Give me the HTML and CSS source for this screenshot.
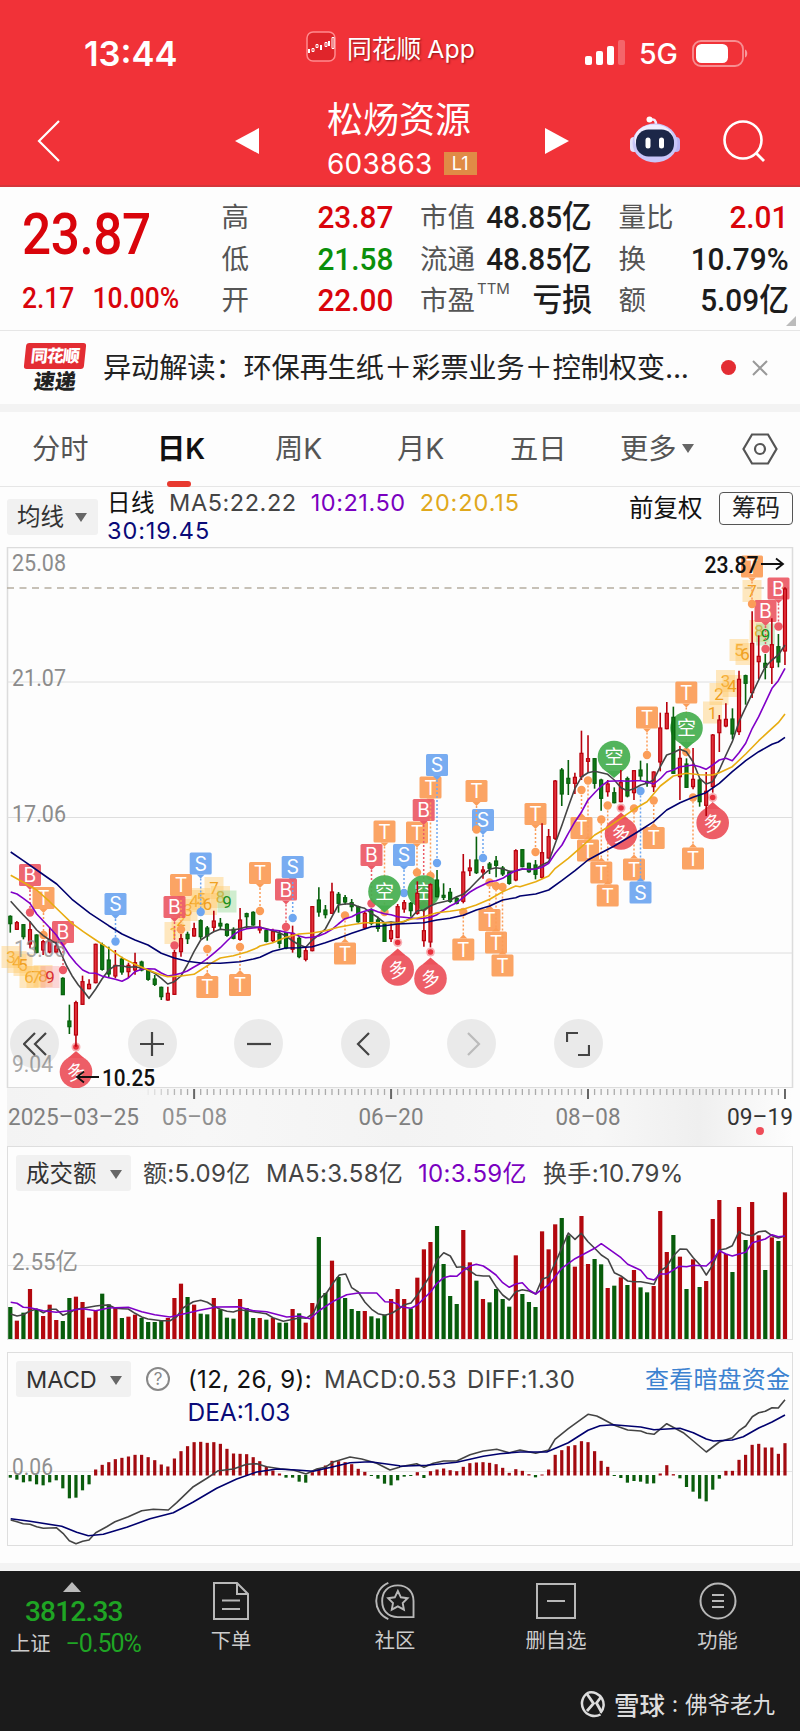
FILE: index.html
```html
<!DOCTYPE html>
<html lang="zh-CN">
<head>
  <meta charset="UTF-8" />
  <meta name="viewport" content="width=device-width, initial-scale=1" />
  <title>松炀资源 603863</title>
  <link rel="stylesheet" href="styles.css">
</head>
<body>

<header>
  <div class="status">
    <span class="time">13:44</span>
    <div class="app">
      <svg width="30" height="31" viewBox="0 0 30 31">
        <rect x="1" y="1" width="28" height="29" rx="6" fill="#e0252b" stroke="#ff8b8e" stroke-width="1.5"/>
        <path d="M3 18v4M15 14v5M23 10v5" stroke="#fff" stroke-width="2"/>
        <path d="M6 17.500h2v3H6zM10 13.500h2v3h-2zM19 11.500h2v4h-2zM26 6.500h2v11h-2z" fill="none" stroke="#fff" stroke-width="1"/>
      </svg>
      <span>同花顺 App</span>
    </div>
    <div class="signal">
      <svg width="40" height="26" viewBox="0 0 40 26">
        <rect x="0" y="16" width="7" height="9" rx="2" fill="#fff"/>
        <rect x="11" y="11" width="7" height="14" rx="2" fill="#fff"/>
        <rect x="22" y="6" width="7" height="19" rx="2" fill="#fff"/>
        <rect x="33" y="0" width="7" height="25" rx="2" fill="#fff" opacity=".25"/>
      </svg>
      <span>5G</span>
      <svg width="57" height="27" viewBox="0 0 57 27">
        <rect x="1" y="1" width="50" height="25" rx="8" fill="none" stroke="#fff" stroke-width="1.8" opacity=".45"/>
        <rect x="4" y="4" width="32" height="19" rx="5.500" fill="#fff"/>
        <path d="M53 9.500c3 1 3 7 0 8z" fill="#fff" opacity=".5"/>
      </svg>
    </div>
  </div>
  <nav>
    <svg class="back" width="24" height="42" viewBox="0 0 24 42"><path d="M22 1L2 21l20 20" fill="none" stroke="#fff" stroke-width="2.200"/></svg>
    <svg class="prev" width="24" height="26" viewBox="0 0 24 26"><path d="M24 0v26L0 13z" fill="#fff"/></svg>
    <div class="stock">
      <h1>松炀资源</h1>
      <p><span>603863</span><b>L1</b></p>
    </div>
    <svg class="next" width="24" height="26" viewBox="0 0 24 26"><path d="M0 0v26l24-13z" fill="#fff"/></svg>
    <svg class="robot" width="50" height="48" viewBox="0 0 50 48">
      <path d="M26 9c0-5-2-6-5-5.500" fill="none" stroke="#f0edff" stroke-width="2.500"/>
      <circle cx="19.500" cy="3.500" r="3" fill="#fff"/>
      <rect x="0" y="21" width="8" height="15" rx="4" fill="#e4e2fb"/>
      <rect x="42" y="21" width="8" height="15" rx="4" fill="#b9b4f4"/>
      <ellipse cx="25" cy="27" rx="22.500" ry="19.500" fill="#c9c6f8"/>
      <ellipse cx="24" cy="23" rx="19.500" ry="14.500" fill="#f0eeff"/>
      <rect x="6" y="13.500" width="38" height="27" rx="12.500" fill="#1c2748"/>
      <rect x="15.500" y="21.500" width="5" height="11" rx="2.500" fill="#fff"/>
      <rect x="29" y="21.500" width="5" height="11" rx="2.500" fill="#fff"/>
    </svg>
    <svg class="search" width="42" height="42" viewBox="0 0 42 42"><circle cx="20" cy="20" r="18.500" fill="none" stroke="#fff" stroke-width="2.600"/><path d="M33 33l8 8" stroke="#fff" stroke-width="2.800"/></svg>
  </nav>
</header>

<section class="quote">
  <div class="price">
    <strong>23.87</strong>
    <p><span>2.17</span><span>10.00%</span></p>
  </div>
  <dl>
    <div><dt>高</dt><dd class="up">23.87</dd></div>
    <div><dt>低</dt><dd class="down">21.58</dd></div>
    <div><dt>开</dt><dd class="up">22.00</dd></div>
  </dl>
  <dl>
    <div><dt>市值</dt><dd>48.85亿</dd></div>
    <div><dt>流通</dt><dd>48.85亿</dd></div>
    <div><dt>市盈<sup>TTM</sup></dt><dd>亏损</dd></div>
  </dl>
  <dl>
    <div><dt>量比</dt><dd class="up">2.01</dd></div>
    <div><dt>换</dt><dd>10.79%</dd></div>
    <div><dt>额</dt><dd>5.09亿</dd></div>
  </dl>
  <i class="corner"></i>
</section>

<section class="news">
  <div class="news-logo"><b>同花顺</b><em>速递</em></div>
  <p>异动解读：环保再生纸＋彩票业务＋控制权变...</p>
  <i class="dot"></i>
  <svg width="16" height="16" viewBox="0 0 16 16"><path d="M1 1l14 14M15 1L1 15" stroke="#999" stroke-width="2"/></svg>
</section>

<nav class="tabs">
  <span>分时</span>
  <span class="active">日K</span>
  <span>周K</span>
  <span>月K</span>
  <span>五日</span>
  <span>更多<i class="caret"></i></span>
  <svg width="36" height="32" viewBox="0 0 36 32"><path d="M10 1.500h16L34.500 16 26 30.500H10L1.500 16z" fill="none" stroke="#555" stroke-width="2.200"/><circle cx="18" cy="16" r="5" fill="none" stroke="#555" stroke-width="2.200"/></svg>
</nav>

<section class="ma">
  <span class="select">均线<i class="caret"></i></span>
  <p>
    <span class="black">日线</span><span class="ma5">MA5:22.22</span><span class="ma10">10:21.50</span><span class="ma20">20:20.15</span><br>
    <span class="ma30">30:19.45</span>
  </p>
  <span class="adjust">前复权</span>
  <span class="chips">筹码</span>
</section>

<section class="kline">
  <svg id="kline" width="800" height="541" viewBox="0 547 800 541"></svg>
  <div class="tools">
    <button><svg viewBox="0 0 24 24"><path d="M12 1L1 12l11 11M23 1L12 12l11 11"/></svg></button>
    <button><svg viewBox="0 0 24 24"><path d="M0 12h24M12 0v24"/></svg></button>
    <button><svg viewBox="0 0 24 24"><path d="M0 12h24"/></svg></button>
    <button><svg viewBox="0 0 24 24"><path d="M16 1L5 12l11 11"/></svg></button>
    <button class="off"><svg viewBox="0 0 24 24"><path d="M8 1l11 11L8 23"/></svg></button>
    <button><svg viewBox="0 0 24 24"><path d="M1 10V1h11M23 13v10H12"/></svg></button>
  </div>
</section>
<svg id="axis" width="800" height="58" viewBox="0 1088 800 58"></svg>

<section class="panel">
  <div class="panel-head">
    <span class="select">成交额<i class="caret"></i></span>
    <span class="v1">额:5.09亿</span><span class="v2">MA5:3.58亿</span><span class="v3 ma10">10:3.59亿</span><span class="v4">换手:10.79%</span>
  </div>
  <svg id="volume" width="784" height="147" viewBox="8 1192 784 147"></svg>
</section>

<section class="panel macd">
  <div class="panel-head">
    <span class="select">MACD<i class="caret"></i></span>
    <span class="help">?</span>
    <span class="m1 black">(12, 26, 9):</span><span class="m2">MACD:0.53</span><span class="m3">DIFF:1.30</span>
    <a>查看暗盘资金</a>
  </div>
  <svg id="macd" width="784" height="148" viewBox="8 1397 784 148"></svg>
</section>

<footer>
  <div class="index">
    <i></i>
    <strong>3812.33</strong>
    <p><span>上证</span><b>−0.50%</b></p>
  </div>
  <div class="item">
    <svg width="36" height="38" viewBox="0 0 36 38"><path d="M1 1h23l11 11v25H1zM24 1v11h11M9 18.500h18M9 27h18"/></svg>
    <span>下单</span>
  </div>
  <div class="item">
    <svg width="42" height="40" viewBox="0 0 42 40"><path d="M14 1C-3 8-3 32 14 39M24 3.500c10 0 16.500 7 16.500 16.500v17H24C13 37 7.500 29.500 7.500 20S13 3.500 24 3.500zM24 9.500l3.200 6.600 7 1-5.100 5 1.300 7-6.400-3.400-6.400 3.400 1.300-7-5.100-5 7-1z"/></svg>
    <span>社区</span>
  </div>
  <div class="item">
    <svg width="40" height="36" viewBox="0 0 40 36"><path d="M1 1h38v34H1zM11 18h18"/></svg>
    <span>删自选</span>
  </div>
  <div class="item">
    <svg width="38" height="38" viewBox="0 0 38 38"><circle cx="19" cy="19" r="17.500"/><path d="M13 13h12M13 19h12M13 25h12"/></svg>
    <span>功能</span>
  </div>
  <div class="mark">
    <svg width="29" height="29" viewBox="0 0 29 29"><path d="M8.500 3.500a12.500 12.500 0 0 1 12 20.500M20.500 25.500a12.500 12.500 0 0 1-12-22" fill="none" stroke="#ddd" stroke-width="2.500"/><path d="M7 5l6.500 9.500L7 22M21 8l-4.500 6 5 9" fill="none" stroke="#ddd" stroke-width="2.800"/></svg>
    <b>雪球</b><span class="colon">:</span><span>佛爷老九</span>
  </div>
</footer>

<script src="chart.js"></script>
</body>
</html>
```
FILE: styles.css
```css
* {
  margin: 0; padding: 0; box-sizing: border-box;
}
body {
  width: 800px;
  background: #fdfdfd;
  color: #222;
  font-family: Inter, 'Noto Sans CJK SC', sans-serif;
}
svg { display: block; flex: none; }
i, em { font-style: normal; }
span { white-space: nowrap; }

header {
  background: #f13238;
  height: 187px;
  color: #fff;
  border-bottom: 2px solid #d5363b;
}
.status {
  display: flex;
  align-items: center;
  height: 94px;
  padding: 12px 0 0 84px;
}
.time {
  font-size: 34.5px;
  font-weight: 600;
  width: 222px;
}
.app {
  display: flex;
  align-items: center;
  gap: 11px;
  width: 279px;
  height: 34px;
  margin-top: -13px;
  font-size: 24.8px;
  text-shadow: 1px 1px 2px rgba(80,0,0,0.6);
}
.app span { word-spacing: -1px; }
.signal {
  display: flex;
  align-items: center;
  gap: 14px;
  font-size: 28.5px;
  font-weight: 500;
}
header nav {
  display: flex;
  align-items: center;
  height: 93px;
  padding-left: 37px;
}
.prev { margin-left: 174px; margin-top: 1px; }
.stock {
  width: 150px;
  margin-left: 68px;
}
.stock h1 {
  font-size: 36px;
  font-weight: 400;
  line-height: 46px;
  white-space: nowrap;
}
.stock p {
  display: flex;
  align-items: center;
  gap: 11px;
  font-size: 28px;
  line-height: 42px;
  letter-spacing: .2px;
}
.stock b {
  background: #e08b46;
  font-size: 18px;
  font-weight: 400;
  width: 34px;
  line-height: 23px;
  text-align: center;
}
.next { margin-left: 68px; margin-top: 1px; }
.robot { margin-left: 61px; margin-top: -2px; }
.search { margin-left: 43px; }

.quote {
  display: grid;
  grid-template-columns: 173px 172px 172px 170px;
  column-gap: 26.5px;
  height: 144px;
  padding: 10px 0 0 22px;
  position: relative;
  border-bottom: 1px solid #e6e6e6;
}
.price {
  color: #d9040b;
  font-family: Roboto, sans-serif;
  white-space: nowrap;
}
.price strong {
  display: block;
  font-size: 57px;
  font-weight: 500;
  line-height: 76px;
  letter-spacing: -0.5px;
  transform: scaleX(.9);
  transform-origin: 0 0;
}
.price p {
  display: flex;
  gap: 20px;
  font-size: 29px;
  font-weight: 500;
  line-height: 50px;
  transform: scaleX(.91);
  transform-origin: 0 0;
}
.quote dl div {
  display: flex;
  justify-content: space-between;
  height: 41.5px;
  line-height: 41.5px;
}
.quote dt {
  font-size: 27.5px;
  color: #555;
  white-space: nowrap;
}
.quote sup {
  font-size: 15px;
  line-height: 0;
  margin-left: 2px;
  position: relative;
  top: -6px;
}
.quote dd {
  font: 500 31.5px/41.5px Roboto, 'Noto Sans CJK SC', sans-serif;
  color: #1c1c1c;
  white-space: nowrap;
  transform: scaleX(.945);
  transform-origin: 100% 0;
}
.quote dd.up { color: #d9040b; }
.quote dd.down { color: #0a8f0a; }
.corner {
  position: absolute;
  right: 4px;
  bottom: 4px;
  border-left: 10px solid transparent;
  border-bottom: 10px solid #bbb;
}

.news {
  display: flex;
  align-items: center;
  height: 81px;
  padding: 0 0 0 25px;
  border-bottom: 8px solid #f3f3f3;
}
.news-logo {
  width: 60px;
  height: 50px;
  text-align: center;
}
.news-logo b {
  display: block;
  background: #e32d33;
  color: #fff;
  font-size: 17px;
  line-height: 26px;
  height: 26px;
  border-radius: 3px;
  font-weight: 900;
  letter-spacing: -1px;
  transform: skewX(-6deg);
}
.news-logo em {
  display: block;
  font-size: 21px;
  line-height: 26px;
  font-weight: 900;
  transform: skewX(-8deg);
}
.news p {
  width: 589px;
  margin-left: 18px;
  font-size: 28.3px;
  letter-spacing: -.2px;
  line-height: 40px;
  color: #222;
  white-space: nowrap;
}
.dot {
  width: 15px;
  height: 15px;
  border-radius: 50%;
  background: #e32d33;
  margin: 0 16px 0 29px;
}

.tabs {
  display: flex;
  height: 75px;
  padding: 0 0 0 32px;
  border-bottom: 1px solid #e6e6e6;
  font-size: 28.3px;
  line-height: 77px;
  color: #555;
  align-items: center;
}
.tabs span:nth-child(1) { width: 125px; }
.tabs span:nth-child(2) { width: 118px; }
.tabs span:nth-child(3) { width: 122px; }
.tabs span:nth-child(4) { width: 113px; }
.tabs span:nth-child(5) { width: 110px; }
.tabs span:nth-child(6) { width: 122px; }
.tabs .active {
  color: #111;
  font-weight: 600;
  position: relative;
}
.active::after {
  content: '';
  position: absolute;
  left: 10px;
  bottom: 1px;
  width: 24px;
  height: 6px;
  border-radius: 3px;
  background: #e8392f;
}
.caret {
  display: inline-block;
  border: 6.5px solid transparent;
  border-top: 9px solid #666;
  border-bottom: 0;
  vertical-align: middle;
}
.tabs .caret { margin: -4px 0 0 5px; }

.ma {
  display: flex;
  height: 60px;
  font-size: 23.5px;
  padding-left: 7px;
}
.select {
  background: #f1f1f1;
  color: #333;
  border-radius: 3px;
  height: 36px;
  line-height: 36px;
  padding-left: 10px;
  flex: none;
}
.ma .select { width: 91px; margin-top: 12px; }
.select .caret { margin: -2px 0 0 11px; }
.ma p {
  width: 522px;
  margin-left: 9px;
  padding-top: 2px;
  line-height: 28px;
  letter-spacing: .55px;
}
.ma p span { margin-right: 14px; }
.ma .ma20 { letter-spacing: .9px; }
.ma .ma30 { letter-spacing: .9px; }
.black { color: #111; }
.ma5 { color: #444; }
.ma10 { color: #7a00c0; }
.ma20 { color: #e0a81c; }
.ma30 { color: #0a0a78; }
.adjust {
  font-size: 24.5px;
  line-height: 42px;
  width: 90px;
  color: #111;
}
.chips {
  border: 1.5px solid #555;
  border-radius: 4px;
  width: 74px;
  height: 33px;
  line-height: 29px;
  margin-top: 5px;
  text-align: center;
  font-size: 24px;
}

.kline { position: relative; }
.tools {
  position: absolute;
  left: 10px;
  top: 472px;
  display: flex;
  gap: 57.6px;
}
.tools button {
  width: 49px;
  height: 49px;
  border: 0;
  border-radius: 50%;
  background: rgba(0,0,0,0.075);
  display: flex;
  align-items: center;
  justify-content: center;
}
.tools button:first-child { margin-right: 11px; }
.tools svg {
  width: 24px;
  height: 24px;
  fill: none;
  stroke: #444;
  stroke-width: 2.2;
}
.tools .off svg { stroke: #bbb; }

.panel {
  width: 786px;
  height: 194px;
  margin-left: 7px;
  border: 1px solid #dedede;
}
.panel + .panel { margin-top: 12px; }
.panel-head {
  display: flex;
  height: 45px;
  padding: 8px 0 0 8px;
  font-size: 24px;
  line-height: 38px;
  letter-spacing: .35px;
  color: #444;
}
.panel-head .select {
  width: 115px;
  padding-left: 10px;
  font-size: 23.5px;
  line-height: 37px;
  letter-spacing: 0;
}
.panel-head .caret { margin-left: 13px; }
.macd .panel-head { height: 44px; }
.v1 { width: 123px; margin-left: 12px; }
.v2 { width: 152px; }
.v3 { width: 125px; }
.help {
  width: 24px;
  height: 24px;
  margin: 6px 18px 0 15px;
  border: 2px solid #888;
  border-radius: 50%;
  color: #888;
  font-size: 17px;
  line-height: 20px;
  text-align: center;
  letter-spacing: 0;
}
.m1 { width: 136px; }
.m2 { width: 143px; }
.m3 { width: 178px; }
.panel-head a { color: #3c82d0; white-space: nowrap; letter-spacing: .2px; }

footer {
  margin-top: 17px;
  border-top: 8px solid #f3f3f3;
  height: 168px;
  background: #1b1b1b;
  color: #ccc;
  display: grid;
  grid-template-columns: 158px 146px 182px 140px 183px;
  grid-template-rows: 100px 60px;
}
.index { padding: 11px 0 0 10px; }
.index i {
  display: block;
  width: 0;
  margin-left: 53px;
  border: 9px solid transparent;
  border-bottom: 10px solid #bbb;
  border-top: 0;
}
.index strong, .index b {
  font-family: Roboto, sans-serif;
  color: #1fa524;
}
.index strong {
  display: block;
  font-weight: 500;
  font-size: 28px;
  line-height: 38px;
  padding-left: 15px;
  margin-top: 1px;
  letter-spacing: -.8px;
}
.index p {
  display: flex;
  gap: 15px;
  font-size: 20.3px;
  line-height: 26px;
}
.index b { font-weight: 400; font-size: 25px; letter-spacing: -1px; }
.item {
  display: flex;
  flex-direction: column;
  align-items: center;
  font-size: 20.3px;
}
.item svg {
  height: 38px;
  margin-top: 11px;
  fill: none;
  stroke: #b8b8b8;
  stroke-width: 2;
}
.item span { line-height: 30px; margin-top: 6px; }
.mark {
  grid-column: 1 / 6;
  display: flex;
  align-items: center;
  padding-left: 580px;
  height: 64px;
  color: #ddd;
  font-size: 22.5px;
}
.mark b { font-size: 25.5px; font-weight: 500; margin-left: 5px; }
.colon { width: 20px; text-align: center; }
```
FILE: chart.js
```js
const STEP = 6.565, X0 = 10.3;
const xAt = i => X0 + i * STEP;

// candles: [up, high, top, bottom, low] in thirds of a pixel below the base line
const CANDLES = [
  { base: 840, rows: [
    [0,226,229,251,278],[1,243,248,268,270],[0,252,254,290,298],[1,243,269,312,325],[0,283,285,337,340],[1,300,305,330,345],[1,262,300,336,340],[1,305,318,336,340],[0,412,415,464,465],[0,494,543,560,582],
    [1,482,488,585,620],[1,407,425,493,494],[1,418,433,446,448],[1,311,313,428,430],[0,308,314,388,392],[0,320,360,402,412],[1,330,376,408,415],[0,350,357,396,404],[1,368,376,395,414],[1,338,368,390,404],
    [0,362,366,390,394],[0,388,390,418,422],[0,405,417,433,438],[0,440,442,470,480],[1,440,460,480,482],[1,330,338,463,465],[1,282,296,335,350],[0,275,283,296,312],[1,248,266,288,290],[0,238,242,290,298],
    [0,258,264,288,302],[1,212,243,262,275],[0,234,250,258,268],[0,250,253,286,290],[0,262,268,295,298],[1,204,240,298,302],[0,218,221,230,264],[0,214,217,255,257],[1,240,262,270,280]] },
  { base: 740, rows: [
    [0,569,572,604,607],[1,566,575,602,606],[0,570,582,610,625],[0,575,578,624,628],[1,557,580,628,638],[0,588,595,650,655],[1,620,632,658,664],[1,498,500,632,634],[0,442,480,516,530],[0,495,510,524,535],
    [1,428,456,520,522],[0,456,463,490,518],[0,465,473,486,494],[0,477,488,500,514],[0,497,500,545,548],[1,516,520,564,568],[0,505,512,550,556],[0,530,540,565,575],[0,548,552,604,606],[1,545,572,596,606],
    [1,492,500,592,594],[1,480,488,507,518],[0,486,490,512,530],[1,424,460,520,524],[1,510,572,602,620],[1,430,434,606,622],[0,390,420,470,472],[0,430,466,472,480],[0,444,457,484,488],[0,470,475,490,493],
    [1,342,396,484,490],[1,358,384,392,408],[0,290,360,398,402],[1,378,390,396,416],[0,366,372,385,402],[0,348,363,376,412],[0,378,384,402,408],[0,392,396,430,434],[1,328,332,420,424]] },
  { base: 550, rows: [
    [0,897,899,950,952],[0,938,940,965,968],[0,930,945,973,988],[1,820,908,982,986],[1,837,860,924,926],[1,690,693,865,870],[0,654,660,732,768],[0,630,685,700,735],[1,668,682,700,732],[1,542,610,680,690],
    [1,556,626,634,668],[0,624,626,700,716],[0,686,690,745,782],[1,690,702,725,740],[0,712,728,758,760],[1,660,698,755,757],[0,680,686,738,742],[1,660,662,728,750],[0,632,660,678,690],[0,640,694,696,710],
    [1,664,666,710,726],[1,488,534,636,664],[1,456,490,536,538],[0,470,502,670,672],[1,588,625,680,750],[0,625,642,712,714],[1,594,688,710,718],[0,684,690,755,770],[1,666,724,766,798],[1,552,555,710,728],
    [1,495,510,548,606],[1,460,508,528,532],[0,475,507,552,568],[1,362,388,545,555],[0,374,377,400,464],[1,184,280,428,444],[1,256,319,335,388],[0,312,340,352,388],[1,205,284,352,402],[0,252,290,336,352],[1,112,117,303,345]] }
];

// line segments are relative to these origins
const K = [[0, 840], [260, 740], [520, 550]];
const P = [[0, 1140], [400, 1140]];

const MA = [
  ['#444', K, [
    '32,184 51,205 70,225 90,245 110,270 130,287 149,300 169,310 185,345 200,378 216,407 235,435 250,452 267,475 287,447 306,417 326,390 346,377 366,377 385,382 405,380 425,384 444,390 464,400 484,415 503,432 523,425 543,408 562,375 582,335 602,300 622,287 641,275 661,268 681,270 700,270 720,266 740,260 760,261 779,262',
    '19,566 38,572 58,578 78,588 98,603 117,614 137,622 157,600 176,585 196,567 216,530 235,495 255,492 275,491 295,500 314,505 334,520 353,532 373,548 393,546 413,548 432,545 452,535 472,512 491,510 512,497 531,490 551,485 570,481 590,470 610,463 630,445 649,425 669,405 689,388 708,383 728,386 748,394 767,393 787,388',
    '27,957 47,957 66,945 86,935 106,880 126,825 145,770 165,715 185,680 204,668 224,664 244,668 263,673 283,690 303,713 322,722 342,716 362,705 381,700 401,690 421,650 440,615 460,608 480,598 499,605 519,635 539,685 558,702 578,695 598,660 618,615 637,575 657,515 677,472 697,430 716,390 736,350 756,330 775,315 795,285']],
  ['#8000c8', K, [
    '32,156 51,162 70,175 90,190 110,222 130,243 149,263 169,285 189,315 208,345 228,370 248,390 267,399 287,400 306,408 326,413 346,418 366,424 385,414 405,395 425,388 444,386 464,387 484,399 503,408 523,405 543,400 562,393 582,381 602,370 622,356 641,340 661,323 681,303 700,285 720,272 740,266 760,264 779,262',
    '19,568 38,570 58,572 78,577 98,580 117,588 137,593 157,592 176,588 196,580 216,568 235,552 255,536 275,530 295,520 314,514 334,508 353,515 373,521 393,524 413,530 432,532 452,534 472,536 491,535 512,532 531,524 551,510 570,498 590,488 610,472 630,456 649,445 669,435 689,425 708,422 728,415 748,402 767,392 787,386',
    '27,959 47,957 66,952 86,940 106,910 126,885 145,850 165,815 185,785 204,750 224,728 244,708 263,694 283,693 303,692 322,694 342,692 362,692 381,696 401,702 421,686 440,666 460,660 480,650 499,648 519,645 539,650 558,658 578,645 598,630 618,625 637,632 657,608 677,580 697,535 716,500 736,458 756,415 775,392 795,355']],
  ['#e8ac10', K, [
    '32,106 70,127 110,150 149,185 180,215 216,250 250,275 287,300 326,325 366,353 405,373 444,390 484,405 503,410 543,408 582,403 602,390 641,365 661,354 700,347 740,336 770,324',
    '0,618 38,608 78,592 117,582 157,579 196,572 235,562 275,554 314,548 353,548 413,549 452,538 491,530 531,518 570,514 610,508 649,495 689,478 728,455 767,438',
    '0,1010 47,995 86,978 106,955 145,925 185,890 224,855 263,832 303,805 342,778 381,755 421,708 460,678 499,670 539,674 578,675 598,668 637,650 677,612 716,572 756,535 775,518 795,492']],
  ['#00006e', K, [
    '32,36 70,62 110,90 170,132 216,178 270,220 326,257 366,282 405,300 444,315 484,340 523,354 562,364 602,369 661,370 720,365 760,357',
    '0,652 38,634 78,624 117,623 157,620 196,608 235,595 275,580 334,560 373,557 413,552 491,548 531,540 570,535 610,526 649,510 689,498 728,480 767,473',
    '0,1038 47,1032 86,1020 125,992 165,962 204,930 244,908 283,888 322,865 362,840 401,815 440,780 480,758 519,742 558,728 598,700 637,665 677,632 716,605 756,583 775,576 795,562']]
];

// marks: [letter, x, box centre, dot]
const MARKS = [
  ['B',30,875,912.5],['T',43.5,898,935],['B',63,932,970],['S',115.5,904,941.5],['T',181,885,929.5],['B',174.5,907,945.5],['S',200.7,863.5,912],['T',260,873,911],['T',207.3,987,949],['T',240,985,947],
  ['S',292.7,867,918],['B',286,889.5,927],['T',345,953.5,915.5],['B',371.5,855,903.5],['T',384.5,831.5,912],['S',404,855,893],['T',417,832.5,872.5],['T',430.5,787.5,876],['B',423.7,810,905],['S',437,765,863],
  ['T',476.5,791,829.5],['S',483,820,858],['T',463.3,949.5,912],['T',489.5,920,882.5],['T',496,942.5,886],['T',502.5,965.5,887],['T',535.5,814,852],['T',581.5,828,790],['T',588,850.5,780.5],['T',601.3,872.5,819.5],
  ['T',607.7,895.5,805.5],['T',634,869.5,808.5],['S',640.5,892.5,791],['T',653.7,838,800.5],['T',647,717.5,755],['T',686.3,692.5,752],['T',693,858.5,797.5],['T',752,566.5,604],['B',765.5,611,649],['B',778.5,588.5,626.5]
];
const MARK_COLOR = { B: '#ec5a66', T: '#fb9d58', S: '#6ea6f0' };

// nine-count digits: [digit, x, y, kind]
const COUNTS = [
  ['3',11,957],['4',17,962],['5',23,965],['6',29,977],['7',36,977],['8',43,976],['9',50,977,'r'],
  ['1',174,933],['2',181,920],['3',188,910],['4',194,901],['5',201,899],['6',207.5,904],['7',214,888],['8',220.5,897],['9',227,901.5,'g'],
  ['1',712.5,712.5],['2',719,694],['3',725.5,681],['4',732,686],['5',739,650],['6',745,654],['7',752,591],['8',759,631],['9',765.5,634.5,'g']
];

const PINS = [
  ['多',76,1072,1047],['多',397.7,969.5,942.5],['多',430.5,978.5,952],['多',621,833.5,808],['多',712.7,823,797.5],
  ['空',384.5,891.5],['空',423.7,891.5],['空',614,757],['空',686.5,728]
];

// volume: tops in thirds of a pixel, negative means a falling day
const VOLUME = [
  -501,542,-518,447,-508,528,494,540,-543,-474,470,486,533,512,-461,-493,503,-534,530,524,-534,-546,-546,-541,534,474,431,-471,494,-521,
  -523,474,-508,-533,-536,477,-504,-534,534,-539,534,-548,-548,507,-520,548,489,-291,-459,362,-411,-474,-507,-513,513,-529,-535,-524,477,447,
  477,-505,413,328,306,-258,-372,-468,-492,270,367,-422,477,-487,-447,-477,-500,346,-462,-486,-501,274,328,253,-234,-286,380,228,372,-357,
  -373,444,-437,412,-435,390,-442,-457,438,213,336,-285,350,-447,358,-441,423,237,180,342,-396,201,-300,186,286,-390,292,-303,157
];
const VOLUME_MA = [
  ['#444', P, [
    '32,522 51,528 70,524 90,513 110,507 130,518 149,508 169,508 189,526 208,518 228,508 248,505 287,498 306,496 326,495 346,505 366,506 385,507 405,520 425,531 444,537 484,542 510,542 530,530 550,503 580,485 602,481 622,487 641,499 661,508 681,514 700,516 720,509 740,512 779,518 799,521 819,533 850,544 880,538 900,533 918,535 940,520 960,475 980,458 1000,428 1018,405 1037,402 1055,443 1075,456 1095,487 1115,508 1134,521 1155,526 1175,520 1195,508',
    '13,494 33,489 52,465 72,435 92,405 111,360 131,338 151,348 170,382 190,380 210,393 229,406 250,408 268,408 288,440 308,465 328,480 347,455 367,449 387,453 407,462 426,418 446,410 465,370 485,325 505,279 525,298 544,280 564,305 584,325 604,345 624,358 643,398 663,408 683,423 700,425 722,425 762,433 781,392 800,380 820,348 840,327 860,328 880,353 900,375 919,405 938,375 958,330 978,326 997,317 1017,275 1037,284 1057,287 1076,275 1096,273 1116,287 1135,294 1155,288']],
  ['#8000c8', P, [
    '32,487 51,490 70,502 90,503 130,512 169,517 208,512 248,506 287,512 326,504 385,502 425,515 464,524 510,531 550,522 602,510 650,501 715,500 760,512 800,515 860,531 900,528 930,536 960,510 1000,484 1040,464 1075,459 1130,459 1155,485 1175,486 1195,493',
    '0,500 33,505 52,495 92,455 111,430 131,413 151,408 170,409 190,392 210,378 229,373 250,378 268,390 288,405 308,428 328,442 347,432 367,428 387,450 407,462 426,448 446,435 485,385 525,356 584,325 604,311 624,325 663,353 683,373 722,391 742,415 762,420 781,402 800,402 838,379 860,380 880,376 919,378 938,360 958,332 978,342 997,348 1017,342 1037,337 1057,308 1096,297 1116,284 1135,290 1155,288']]
];

const MACD = [
  1014,1020,1028,1025,1034,1037,1028,1022,1046,1076,1074,1052,1034,988,974,966,957,953,949,944,944,951,960,973,979,955,933,918,906,905,
  908,906,911,926,940,941,942,951,963,980,991,1000,1014,1014,1026,1029,996,984,976,962,963,966,972,986,995,1009,1017,1032,1037,1022,
  1011,1009,996,1015,993,988,985,990,993,980,969,967,966,968,972,983,998,987,992,1002,1013,1003,988,944,930,918,915,903,906,933,
  962,980,1009,1015,1029,1024,1026,1032,1031,1000,975,1002,1016,1042,1056,1077,1085,1050,1017,992,992,959,944,914,911,922,922,941,909
];
const MACD_LINES = [
  ['#444', P, [
    '32,1140 51,1145 70,1151 90,1153 110,1160 130,1165 149,1164 169,1163 189,1180 208,1202 228,1211 248,1204 267,1200 287,1178 320,1160 345,1145 385,1130 425,1112 460,1108 505,1110 530,1088 580,1040 622,1014 655,992 700,987 740,973 770,971 800,980 840,986 880,990 918,1002 950,987 975,982 1000,966 1050,951 1085,957 1130,970 1170,990 1198,982',
    '0,980 50,971 72,982 100,970 131,963 170,963 210,944 250,933 290,928 328,938 360,930 407,940 446,930 465,898 505,866 564,823 590,828 604,835 643,856 683,870 722,873 740,880 762,883 800,851 850,878 880,903 919,936 958,906 997,893 1017,872 1037,858 1057,830 1076,818 1096,814 1116,803 1135,804 1155,779']],
  ['#00006e', P, [
    '32,1136 90,1144 185,1159 230,1177 265,1187 310,1183 380,1162 450,1136 520,1118 580,1086 650,1045 710,1017 770,996 830,987 890,990 940,994 1000,980 1050,968 1110,965 1160,972 1198,977',
    '0,979 80,976 170,967 250,949 300,941 360,936 440,936 505,908 564,871 600,857 640,854 722,861 762,869 840,865 880,878 919,897 940,903 997,900 1030,890 1076,864 1116,846 1155,825']]
];

function rect(x, y, w, h, fill, extra = '') {
  return `<rect x="${x}" y="${y}" width="${w}" height="${h}" fill="${fill}" ${extra}/>`;
}
function text(str, x, y, w, fill, size = 24, extra = '') {
  return `<text x="${x}" y="${y}" textLength="${w}" lengthAdjust="spacingAndGlyphs" fill="${fill}" font-size="${size}" font-family="Roboto, 'Noto Sans CJK SC', sans-serif" ${extra}>${str}</text>`;
}
function lines(list, width) {
  return list.map(([color, origins, parts]) => {
    const pts = parts.map((part, n) => part.split(' ').map(p => {
      const [x, y] = p.split(',');
      return (origins[n][0] + x / 3).toFixed(1) + ',' + (origins[n][1] + y / 3).toFixed(1);
    }).join(' ')).join(' ');
    return `<polyline points="${pts}" fill="none" stroke="${color}" stroke-width="${width}" stroke-linejoin="round"/>`;
  }).join('');
}
function hline(y, color = '#dedede', extra = '') {
  return `<path d="M7 ${y}H793" stroke="${color}" ${extra}/>`;
}

function drawKline() {
  let s = '<path d="M7.500 1088V547.500H792.500V1088" fill="none" stroke="#dcdcdc" stroke-width="1.500"/>';
  s += hline(682) + hline(817.5) + hline(953) + hline(1087.5, '#dcdcdc');
  s += hline(588, '#b5ada0', 'stroke-width="1.300" stroke-dasharray="7 5.500"');

  COUNTS.forEach(([d, x, y, kind]) => {
    const box = kind === 'r' ? '#f8a0a0' : kind === 'g' ? '#8fd68f' : '#ffc766';
    const ink = kind === 'r' ? '#d83030' : kind === 'g' ? '#1c901c' : '#f0a020';
    s += rect(x - 9.5, y - 11, 19, 22, box, 'opacity=".42"');
    s += `<text x="${x}" y="${y + 6}" fill="${ink}" font-size="17" text-anchor="middle" font-family="Roboto">${d}</text>`;
  });

  MARKS.forEach(([letter, x, y, dot]) => {
    const c = MARK_COLOR[letter];
    const dir = dot > y ? 1 : -1;
    s += rect(x - 11, y - 11, 22, 22, c, 'rx="1.500" opacity=".93"');
    s += `<path d="M${x - 4} ${y + dir * 11}h8l-4 ${dir * 4}z" fill="${c}"/>`;
    s += `<text x="${x}" y="${y + 7}" fill="#fff" font-size="19.500" text-anchor="middle" font-family="Inter">${letter}</text>`;
  });
  MARKS.forEach(([letter, x, y, dot]) => {
    const c = MARK_COLOR[letter];
    const dir = dot > y ? 1 : -1;
    s += `<path d="M${x} ${y + dir * 15}V${dot}" stroke="${c}" stroke-width="1.500" stroke-dasharray="2 2"/>`;
    s += `<circle cx="${x}" cy="${dot}" r="4.200" fill="${c}"/>`;
  });

  PINS.forEach(([ch, x, y, dot]) => {
    const c = dot ? '#ec525b' : '#46ae50';
    const dir = dot ? -1 : 1;
    s += `<circle cx="${x}" cy="${y}" r="16.300" fill="${c}" opacity=".93"/>`;
    s += `<path d="M${x - 8} ${y + dir * 14}h16l-8 ${dir * 7}z" fill="${c}"/>`;
    if (dot) {
      s += `<circle cx="${x}" cy="${dot}" r="4.500" fill="#f7b0b4"/><circle cx="${x}" cy="${dot}" r="2.800" fill="#e8303c"/>`;
    }
    const tilt = dot ? `transform="rotate(-14 ${x} ${y})"` : '';
    s += `<text x="${x}" y="${y + 7}" ${tilt} fill="#fff" font-size="19" text-anchor="middle" font-family="Noto Sans CJK SC">${ch}</text>`;
  });

  let i = 0;
  CANDLES.forEach(({ base, rows }) => rows.forEach(([up, high, top, bottom, low]) => {
    const x = xAt(i++);
    const c = up ? '#b8000c' : '#07600c';
    s += `<path d="M${x} ${base + high / 3}V${base + low / 3}" stroke="${c}" stroke-width="1.600"/>`;
    s += rect(x - 1.5, base + top / 3, 3, Math.max((bottom - top) / 3, 1.5), up ? '#e0303a' : '#0f7a16', `stroke="${c}" stroke-width="1.200"`);
  }));
  s += lines(MA, 1.6);

  [['25.08', 571], ['21.07', 685.5], ['17.06', 821.5]].forEach(([t, y]) => s += text(t, 12, y, 54, '#8c8c8c'));
  s += text('13.05', 14, 957, 52, '#8c8c8c', 24, 'opacity=".75"');
  s += text('9.04', 12, 1072, 41, '#aaa');
  s += '<path d="M99 1077H77M84 1071.500l-7 5.500 7 5.500M761 564H783M776 558.500l7 5.500-7 5.500" fill="none" stroke="#111" stroke-width="1.800"/>';
  s += text('10.25', 102, 1085.5, 53, '#111', 24, 'font-weight="500"');
  s += text('23.87', 704.5, 572.5, 54, '#111', 24, 'font-weight="500"');
  document.getElementById('kline').innerHTML = s;
}

function drawAxis() {
  let s = '<defs><linearGradient id="g"><stop offset="0" stop-color="#f3f3f3"/><stop offset=".25" stop-color="#f7f7f7"/><stop offset=".5" stop-color="#f3f3f3"/><stop offset=".75" stop-color="#f7f7f7"/><stop offset=".88" stop-color="#efefef"/><stop offset="1" stop-color="#fdfdfd"/></linearGradient></defs>';
  s += rect(7, 1088, 786, 58, 'url(#g)');
  for (let i = 21; i <= 118; i++) {
    const major = i % 30 === 28;
    s += `<path d="M${xAt(i)} 1089V${major ? 1099 : 1095}" stroke="${major ? '#666' : '#aaa'}" stroke-width="${major ? 2 : 1.3}" opacity="${Math.min(1, (i - 20) / 6)}"/>`;
  }
  s += text('2025–03–25', 8, 1124.5, 131, '#808080');
  s += text('05–08', 162, 1124.5, 65, '#909090');
  s += text('06–20', 358.5, 1124.5, 65, '#808080');
  s += text('08–08', 555.5, 1124.5, 65, '#808080');
  s += text('09–19', 727, 1124.5, 66, '#333');
  s += '<circle cx="760" cy="1131" r="4" fill="#ee4c58"/>';
  document.getElementById('axis').innerHTML = s;
}

function drawVolume() {
  let s = hline(1265.5, '#e4e4e4') + text('2.55亿', 12, 1269.5, 66, '#909090');
  VOLUME.forEach((v, i) => {
    const y = 1140 + Math.abs(v) / 3;
    s += rect(xAt(i) - 2.1, y, 4.2, 1339 - y, v > 0 ? '#b3080e' : '#075c0b');
  });
  document.getElementById('volume').innerHTML = s + lines(VOLUME_MA, 1.6);
}

function drawMacd() {
  let s = hline(1471.5, '#e4e4e4') + text('0.06', 12, 1474.5, 41, '#909090');
  MACD.forEach((v, i) => {
    const h = Math.abs(1006 - v) / 3;
    s += rect(xAt(i) - 1.6, v < 1006 ? 1475.5 - h : 1475, 3.2, h, v < 1006 ? '#a30a10' : '#0a5c0c');
  });
  s += `<text x="187.500" y="1421" textLength="103" fill="#0a0a78" font-size="24.500" font-family="Inter">DEA:1.03</text>`;
  document.getElementById('macd').innerHTML = s + lines(MACD_LINES, 1.6);
}

drawKline();
drawAxis();
drawVolume();
drawMacd();
```
